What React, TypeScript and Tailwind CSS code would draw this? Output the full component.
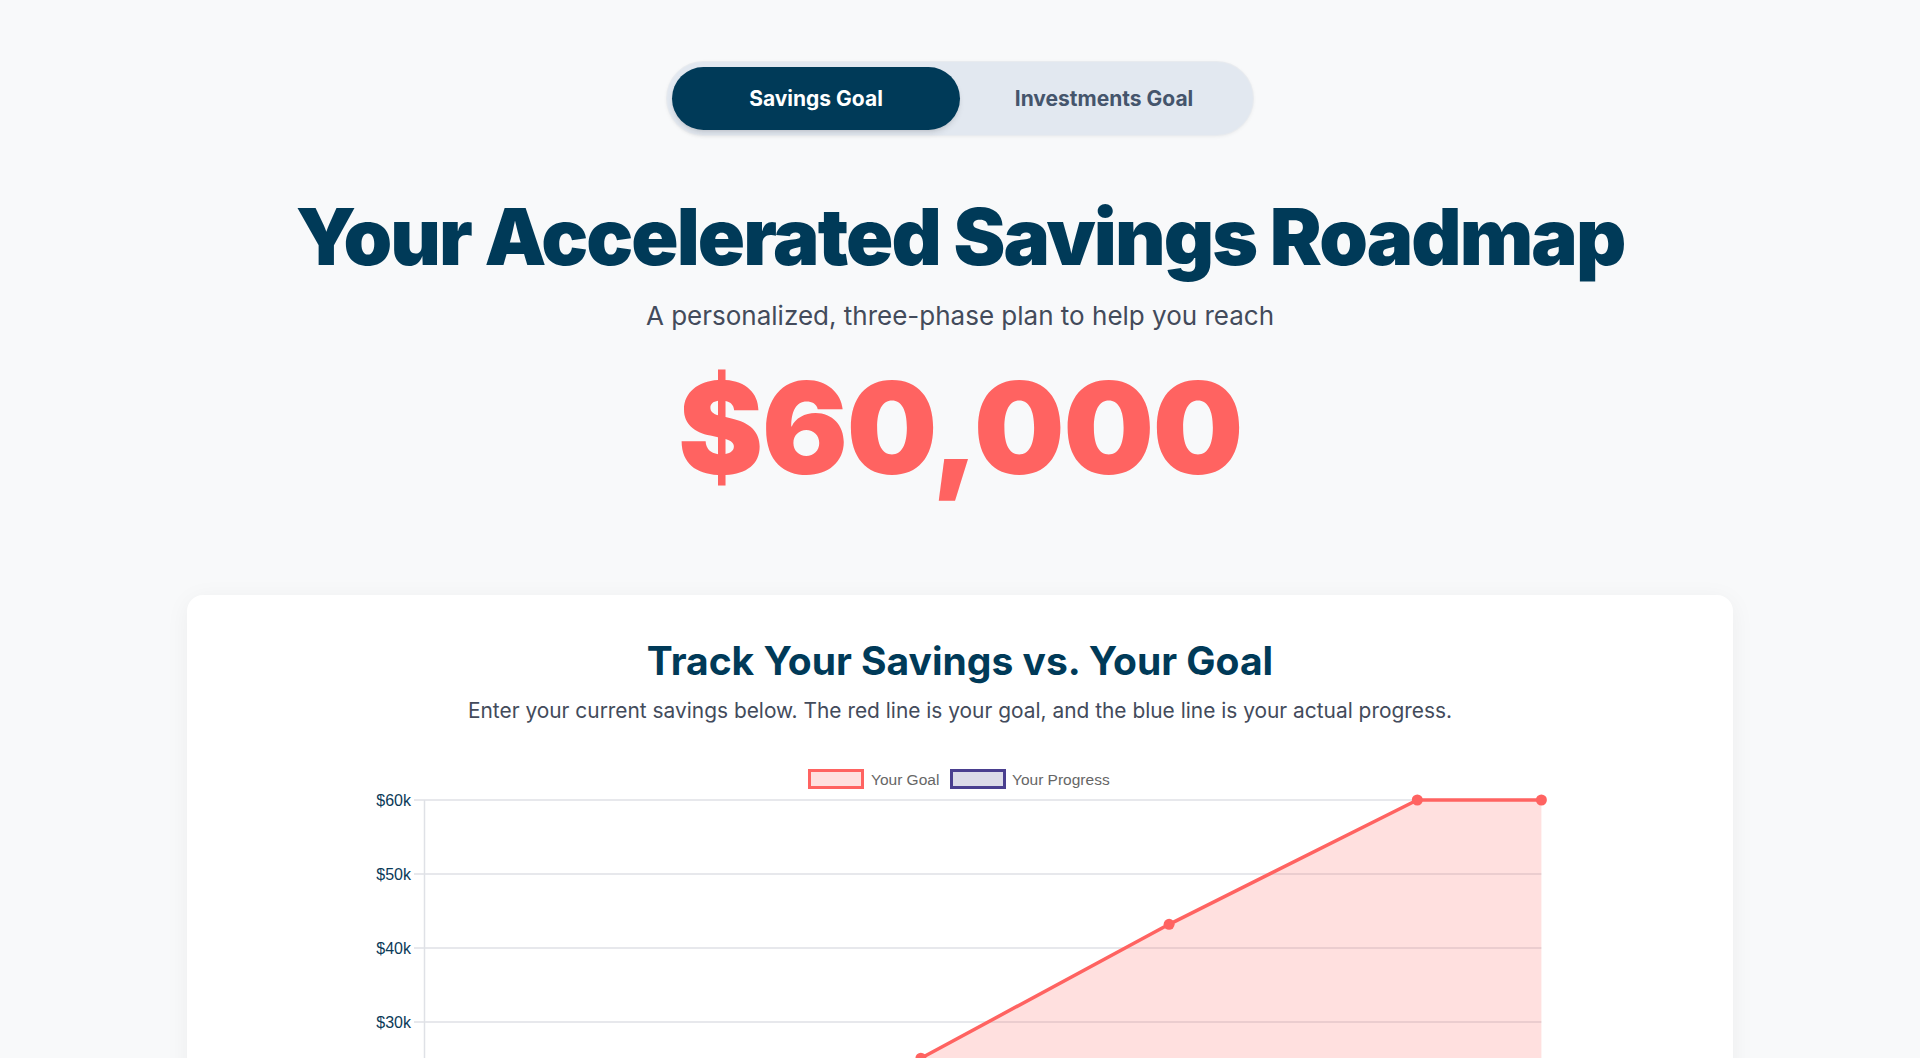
import { useState } from "react";

// goal curve: [x position in months, value in $k]
const goalPoints: [number, number][] = [
  [0, 0],
  [2, 12.5],
  [4, 25.1],
  [6, 43.2],
  [8, 60],
  [9, 60],
];

const yTicks = [60, 50, 40, 30, 20, 10, 0];

const xOf = (m: number) => 64.5 + m * 124.1;
const yOf = (k: number) => 44 + (60 - k) * 7.4;

function SavingsChart() {
  const line = goalPoints.map(([m, v]) => `${xOf(m)},${yOf(v)}`).join(" ");
  const area = `${xOf(0)},${yOf(0)} ${line} ${xOf(9)},${yOf(0)}`;
  const right = xOf(9);

  return (
    <svg width={1200} height={540} viewBox="0 0 1200 540" className="mx-auto block">
      {/* legend */}
      <rect x={449.5} y={14.5} width={53} height={17} fill="#ffe0df" stroke="#ff6361" strokeWidth={3} />
      <text x={511} y={29} fontSize={15.5} fill="#666" fontFamily="'Liberation Sans', Arial, sans-serif">
        Your Goal
      </text>
      <rect x={591.5} y={14.5} width={53} height={17} fill="#dcdbe8" stroke="#4a3f8f" strokeWidth={3} />
      <text x={652} y={29} fontSize={15.5} fill="#666" fontFamily="'Liberation Sans', Arial, sans-serif">
        Your Progress
      </text>

      {/* grid + y axis */}
      {yTicks.map((t) => (
        <g key={t}>
          <line x1={54} x2={right} y1={yOf(t)} y2={yOf(t)} stroke="#dfe1e6" strokeWidth={1.5} />
          <text
            x={51}
            y={yOf(t) + 5.5}
            textAnchor="end"
            fontSize={16}
            fill="#0b3a58"
            fontFamily="'Liberation Sans', Arial, sans-serif"
          >
            ${t}k
          </text>
        </g>
      ))}
      <line x1={64.5} x2={64.5} y1={44} y2={yOf(0) + 8} stroke="#dfe1e6" strokeWidth={1.5} />

      {/* goal dataset */}
      <polygon points={area} fill="#ff6361" fillOpacity={0.2} />
      <polyline points={line} fill="none" stroke="#ff6361" strokeWidth={3.5} strokeLinejoin="round" />
      {goalPoints.map(([m, v]) => (
        <circle key={m} cx={xOf(m)} cy={yOf(v)} r={5.5} fill="#ff6361" />
      ))}
    </svg>
  );
}

export default function App() {
  const [tab, setTab] = useState<"savings" | "investments">("savings");

  return (
    <div className="min-h-screen bg-[#f8f9fa] font-['Inter',sans-serif] pb-24">
      <div className="flex flex-col items-center pt-[62px]">
        <div className="flex rounded-full bg-[#e2e8f0] p-[5px] shadow-[0_1px_4px_rgba(0,0,0,0.08)] ring-1 ring-[#e8ebef]">
          <button
            onClick={() => setTab("savings")}
            className={`flex h-[63px] w-[288px] items-center justify-center rounded-full text-[21px] font-bold ${
              tab === "savings" ? "bg-[#003a58] text-white shadow-md" : "text-slate-600"
            }`}
          >
            Savings Goal
          </button>
          <button
            onClick={() => setTab("investments")}
            className={`flex h-[63px] w-[288px] items-center justify-center rounded-full text-[21px] font-bold ${
              tab === "investments" ? "bg-[#003a58] text-white shadow-md" : "text-slate-600"
            }`}
          >
            Investments Goal
          </button>
        </div>

        <h1 className="mt-[63px] text-[78px] font-black leading-none tracking-tight text-[#003a58]">
          Your Accelerated Savings Roadmap
        </h1>
        <p className="mt-[24px] text-[26px] leading-8 text-[#434b5b]">
          A personalized, three-phase plan to help you reach
        </p>
        <div className="mt-[32px] text-9xl font-black leading-none tracking-[-0.0125em] text-[#ff6361]">$60,000</div>
      </div>

      <div className="mx-auto mt-[103px] w-[1546px] rounded-2xl bg-white pt-11 shadow-[0_4px_24px_rgba(0,0,0,0.05)]">
        <h2 className="text-center text-[39px] font-bold leading-[44px] text-[#003a58]">
          Track Your Savings vs. Your Goal
        </h2>
        <p className="mt-[14px] text-center text-[20.9px] leading-7 text-[#434b5b]">
          Enter your current savings below. The red line is your goal, and the blue line is your actual progress.
        </p>
        <div className="mt-[31px] pb-12">
          <SavingsChart />
        </div>
      </div>
    </div>
  );
}
